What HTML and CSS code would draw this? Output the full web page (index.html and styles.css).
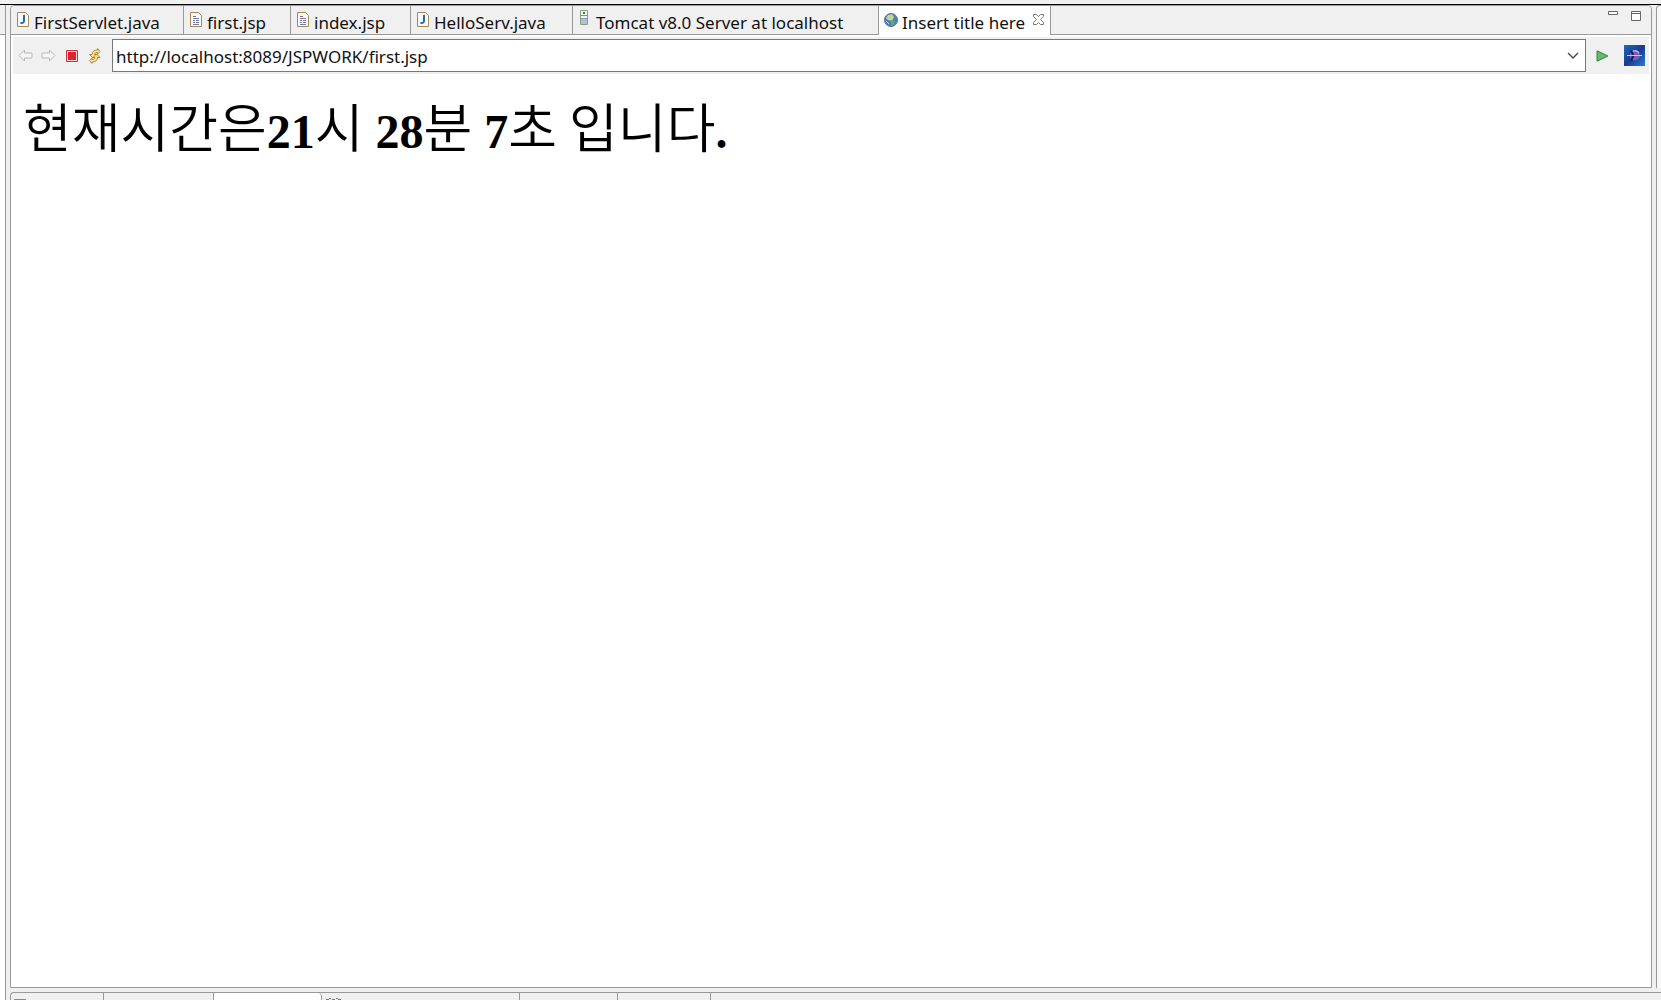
FILE: index.html
```html
<!DOCTYPE html>
<html lang="ko">
<head>
<meta charset="utf-8">
<title>Insert title here</title>
<link rel="stylesheet" href="styles.css">
</head>
<body>
<svg class="defs" aria-hidden="true">
  <symbol id="java" viewBox="0 0 12 15"><path d="M.5.500h8l3 3v11H.5z" fill="#f7f9fc" stroke="#a58a55"/><path d="M7 3v6q0 2.500-3.500 2" fill="none" stroke="#2f66a5" stroke-width="2"/></symbol>
  <symbol id="jsp" viewBox="0 0 12 15"><path d="M.5.500h8l3 3v11H.5z" fill="#f7f9fc" stroke="#a58a55"/><path d="M3 4.500h3M3 8.500h2M6 10.500h3" stroke="#a55b78"/><path d="M3 6.500h6M6 8.500h3M3 10.500h2M3 12.500h6" stroke="#5d86b8"/></symbol>
</svg>
<div class="workbench">
  <aside class="side side-left"></aside>
  <main class="editor">
    <nav class="tabs">
      <button class="tab tab-servlet"><svg class="file"><use href="#java"/></svg>FirstServlet.java</button>
      <button class="tab tab-first"><svg class="file"><use href="#jsp"/></svg>first.jsp</button>
      <button class="tab tab-index"><svg class="file"><use href="#jsp"/></svg>index.jsp</button>
      <button class="tab tab-hello"><svg class="file"><use href="#java"/></svg>HelloServ.java</button>
      <button class="tab tab-server"><svg class="server" viewBox="0 0 9 16"><path d="M.5.500h7v14h-7z" fill="#eef3ec" stroke="#8aa087"/><path d="M1 5.500h6" stroke="#6f9a73"/><path d="M3 2h2v2H3z" fill="#23804a"/><path d="M1 9h6v5H1z" fill="#b4c0d3"/><path d="M1 8.500h6" stroke="#8b98ad"/></svg>Tomcat v8.0 Server at localhost</button>
      <button class="tab tab-active"><svg class="globe" viewBox="0 0 14 14"><circle cx="7" cy="7" r="6.500" fill="#4c82b5"/><path d="M4 2l4-1 2 3-2 4-4-1-2-2z" fill="#c5d795"/><path d="M7 7l4 1-1 4-3 1z" fill="#6ba276"/><path d="M2 8l3 3" stroke="#bed9ee"/><circle cx="7" cy="7" r="6.500" fill="none" stroke="#557291"/></svg>Insert title here<svg class="close" viewBox="0 0 11 11"><path d="M.5.500h3l2 2 2-2h3v2l-3 3 3 3v2h-3l-2-2-2 2h-3v-2l3-3-3-3z" fill="#fff" stroke="#777"/></svg></button>
      <span class="window-buttons">
        <button class="icon-button" aria-label="Minimize"><svg class="minimize" viewBox="0 0 10 4"><path d="M.5.500h9v3h-9z" fill="#fff" stroke="#666"/></svg></button>
        <button class="icon-button" aria-label="Maximize"><svg class="maximize" viewBox="0 0 10 10"><path d="M.5.500h9v9h-9zM1 2.500h8" fill="#fff" stroke="#666"/></svg></button>
      </span>
    </nav>
    <form class="toolbar">
      <button type="button" class="icon-button" aria-label="Back"><svg class="nav-icon" viewBox="0 0 15 13"><path d="M1 6.500L6.500 1v3H14v5H6.500v3z" fill="#f6f6f6" stroke="#b8b8b8"/></svg></button>
      <button type="button" class="icon-button" aria-label="Forward"><svg class="nav-icon" viewBox="0 0 15 13"><path d="M14 6.500L8.500 1v3H1v5h7.500v3z" fill="#f6f6f6" stroke="#b8b8b8"/></svg></button>
      <button type="button" class="icon-button stop" aria-label="Stop"><svg class="stop-icon" viewBox="0 0 12 12"><path d="M.5.500h11v11H.5z" fill="#fbdcdc" stroke="#c9343a"/><path d="M2 2h8v8H2z" fill="#df2430"/></svg></button>
      <button type="button" class="icon-button" aria-label="Refresh"><svg class="refresh-icon" viewBox="0 0 16 16"><g fill="#fbe49a" stroke="#b7862a"><path d="M9.500 1v1.500C6 2.500 4 4 4 7H1.500L5 10.500 8.500 7H6.500c0-1 1-2 3-2v1.500L12 4z" transform="translate(1 -.5)"/><path d="M9.500 1v1.500C6 2.500 4 4 4 7H1.500L5 10.500 8.500 7H6.500c0-1 1-2 3-2v1.500L12 4z" transform="rotate(180 8 8) translate(1.500 -.5)"/></g></svg></button>
      <div class="address">
        <input class="url" type="text" aria-label="Address" value="http://localhost:8089/JSPWORK/first.jsp">
        <button type="button" class="icon-button" aria-label="Show history"><svg class="chevron" viewBox="0 0 12 7"><path d="M1 1l5 5 5-5" fill="none" stroke="#444" stroke-width="1.300"/></svg></button>
      </div>
      <button type="submit" class="icon-button" aria-label="Go"><svg class="go-icon" viewBox="0 0 13 12"><path d="M1 .8L12 6 1 11.200z" fill="#69b96d" stroke="#2f8642"/></svg></button>
      <button type="button" class="icon-button" aria-label="Web browser"><svg class="browser-icon" viewBox="0 0 21 21"><defs><linearGradient id="sky" x2="1" y2="1"><stop stop-color="#1c6cc0"/><stop offset=".5" stop-color="#173b91"/><stop offset="1" stop-color="#2380cd"/></linearGradient></defs><path d="M0 0h21v21H0z" fill="url(#sky)"/><circle cx="11" cy="10.500" r="5" fill="#7a5db4"/><path d="M8 7q4-3 7 1" fill="none" stroke="#c3a8e4" stroke-width="1.500"/><path d="M7 5.500q4 5 0 10" fill="none" stroke="#231a5c" stroke-width="2"/><path d="M3 10.500h15" stroke="#c6c5ed"/></svg></button>
    </form>
    <article class="page">
      <h1 class="clock"><span class="hangul">현재시간은</span>21<span class="hangul">시</span> 28<span class="hangul">분</span> 7<span class="hangul">초</span> <span class="hangul">입니다</span>.</h1>
    </article>
  </main>
  <aside class="side side-right"></aside>
  <footer class="views">
    <span class="view view-a"><i class="view-mark"></i></span><span class="view view-b"></span><span class="view view-current"></span><span class="view view-c"><svg class="view-dots" viewBox="0 0 16 2"><path d="M0 1.500h3M6 1.500h3M12 1.500h3M3 .5h2M10 .5h2" stroke="#777"/></svg></span><span class="view view-d"></span><span class="view view-e"></span>
  </footer>
</div>
</body>
</html>
```
FILE: styles.css
```css
* { box-sizing: border-box; }
body { margin: 0; background: #f0f0f0; color: #111; font-family: "Noto Sans", "Noto Sans CJK KR", sans-serif; font-size: 17px; }
button, input { font: inherit; color: inherit; border: 0; padding: 0; background: none; }
svg { display: block; flex: none; }
.defs { position: absolute; width: 0; height: 0; }
.workbench { height: 100vh; overflow: hidden; display: grid; grid-template-columns: 6px minmax(0, 1fr) 5px; grid-template-rows: minmax(0, 1fr) 8px; column-gap: 4px; row-gap: 4px; padding-top: 1px; background: #f0f0f0; border-top: 4px solid #f0f0f0; box-shadow: inset 0 1px #000; }
.side { background: linear-gradient(#f0f0f0 29px, #999 29px, #999 30px, #fff 30px); border: 0 solid #999; }
.side-left { border-right-width: 1px; grid-row: 1 / 3; }
.side-right { border-left-width: 1px; border-top-width: 1px; border-top-left-radius: 4px; background: #f8f8f8; }
.editor { display: flex; flex-direction: column; border: 1px solid #999; border-radius: 4px 4px 0 0; background: #fff; }
.tabs { display: flex; height: 29px; flex: none; background: linear-gradient(#f0f0f0 28px, #999 28px); border-radius: 4px 4px 0 0; }
.tab { display: flex; align-items: center; height: 28px; padding: 4px 0 0 6px; border-right: 1px solid #999; white-space: nowrap; }
.tab-servlet { width: 173px; }
.tab-first { width: 107px; }
.tab-index { width: 120px; }
.tab-hello { width: 162px; }
.tab-server { width: 306px; padding-left: 7px; }
.tab-active { width: 172px; height: 29px; padding-left: 5px; background: #fff; }
.file { width: 12px; height: 15px; margin: 0 5px 6px 0; }
.server { width: 9px; height: 16px; margin: 0 7px 8px 0; }
.globe { width: 14px; height: 14px; margin: 0 4px 5px 0; }
.close { width: 11px; height: 11px; margin: 0 0 6px 8px; }
.window-buttons { display: flex; align-items: flex-start; gap: 13px; margin: 5px 10px 0 auto; }
.minimize { width: 10px; height: 4px; }
.maximize { width: 10px; height: 10px; }
.icon-button { display: flex; align-items: center; justify-content: center; flex: none; }
.toolbar { display: flex; align-items: center; flex: none; gap: 8px; height: 37px; margin: 2px 2px 0; padding: 0 4px 0 5px; background: #f0f0f0; }
.nav-icon { width: 15px; height: 13px; }
.stop { margin: 0 1px 0 2px; }
.stop-icon { width: 12px; height: 12px; }
.refresh-icon { width: 16px; height: 16px; }
.address { display: flex; flex: 1; height: 33px; margin-left: 1px; padding: 0 6px 0 3px; background: #fff; border: 1px solid #777; }
.url { flex: 1; min-width: 0; outline: 0; padding-top: 2px; }
.chevron { width: 12px; height: 7px; }
.go-icon { width: 13px; height: 12px; margin: 0 7px 0 2px; }
.browser-icon { width: 21px; height: 21px; }
.page { flex: 1; padding: 18px 12px; color: #000; }
.clock { margin: 0; font: bold 48px/80px "Liberation Serif", "Noto Sans CJK KR", serif; white-space: nowrap; }
.hangul { font-family: "Noto Sans CJK KR", sans-serif; font-size: 53px; font-weight: 350; line-height: 1; }
.views { grid-column: 2 / 4; display: flex; border: 1px solid #999; border-width: 1px 0 0 1px; border-top-left-radius: 4px; }
.view { border-right: 1px solid #999; }
.view-a { width: 93px; padding: 6px 0 0 3px; }
.view-mark { display: block; width: 12px; height: 1px; background: #888; }
.view-b { width: 110px; }
.view-current { width: 108px; background: #fff; border-radius: 4px 4px 0 0; }
.view-c { width: 198px; padding: 5px 0 0 4px; }
.view-dots { width: 16px; height: 2px; }
.view-d { width: 98px; }
.view-e { width: 93px; }
```
